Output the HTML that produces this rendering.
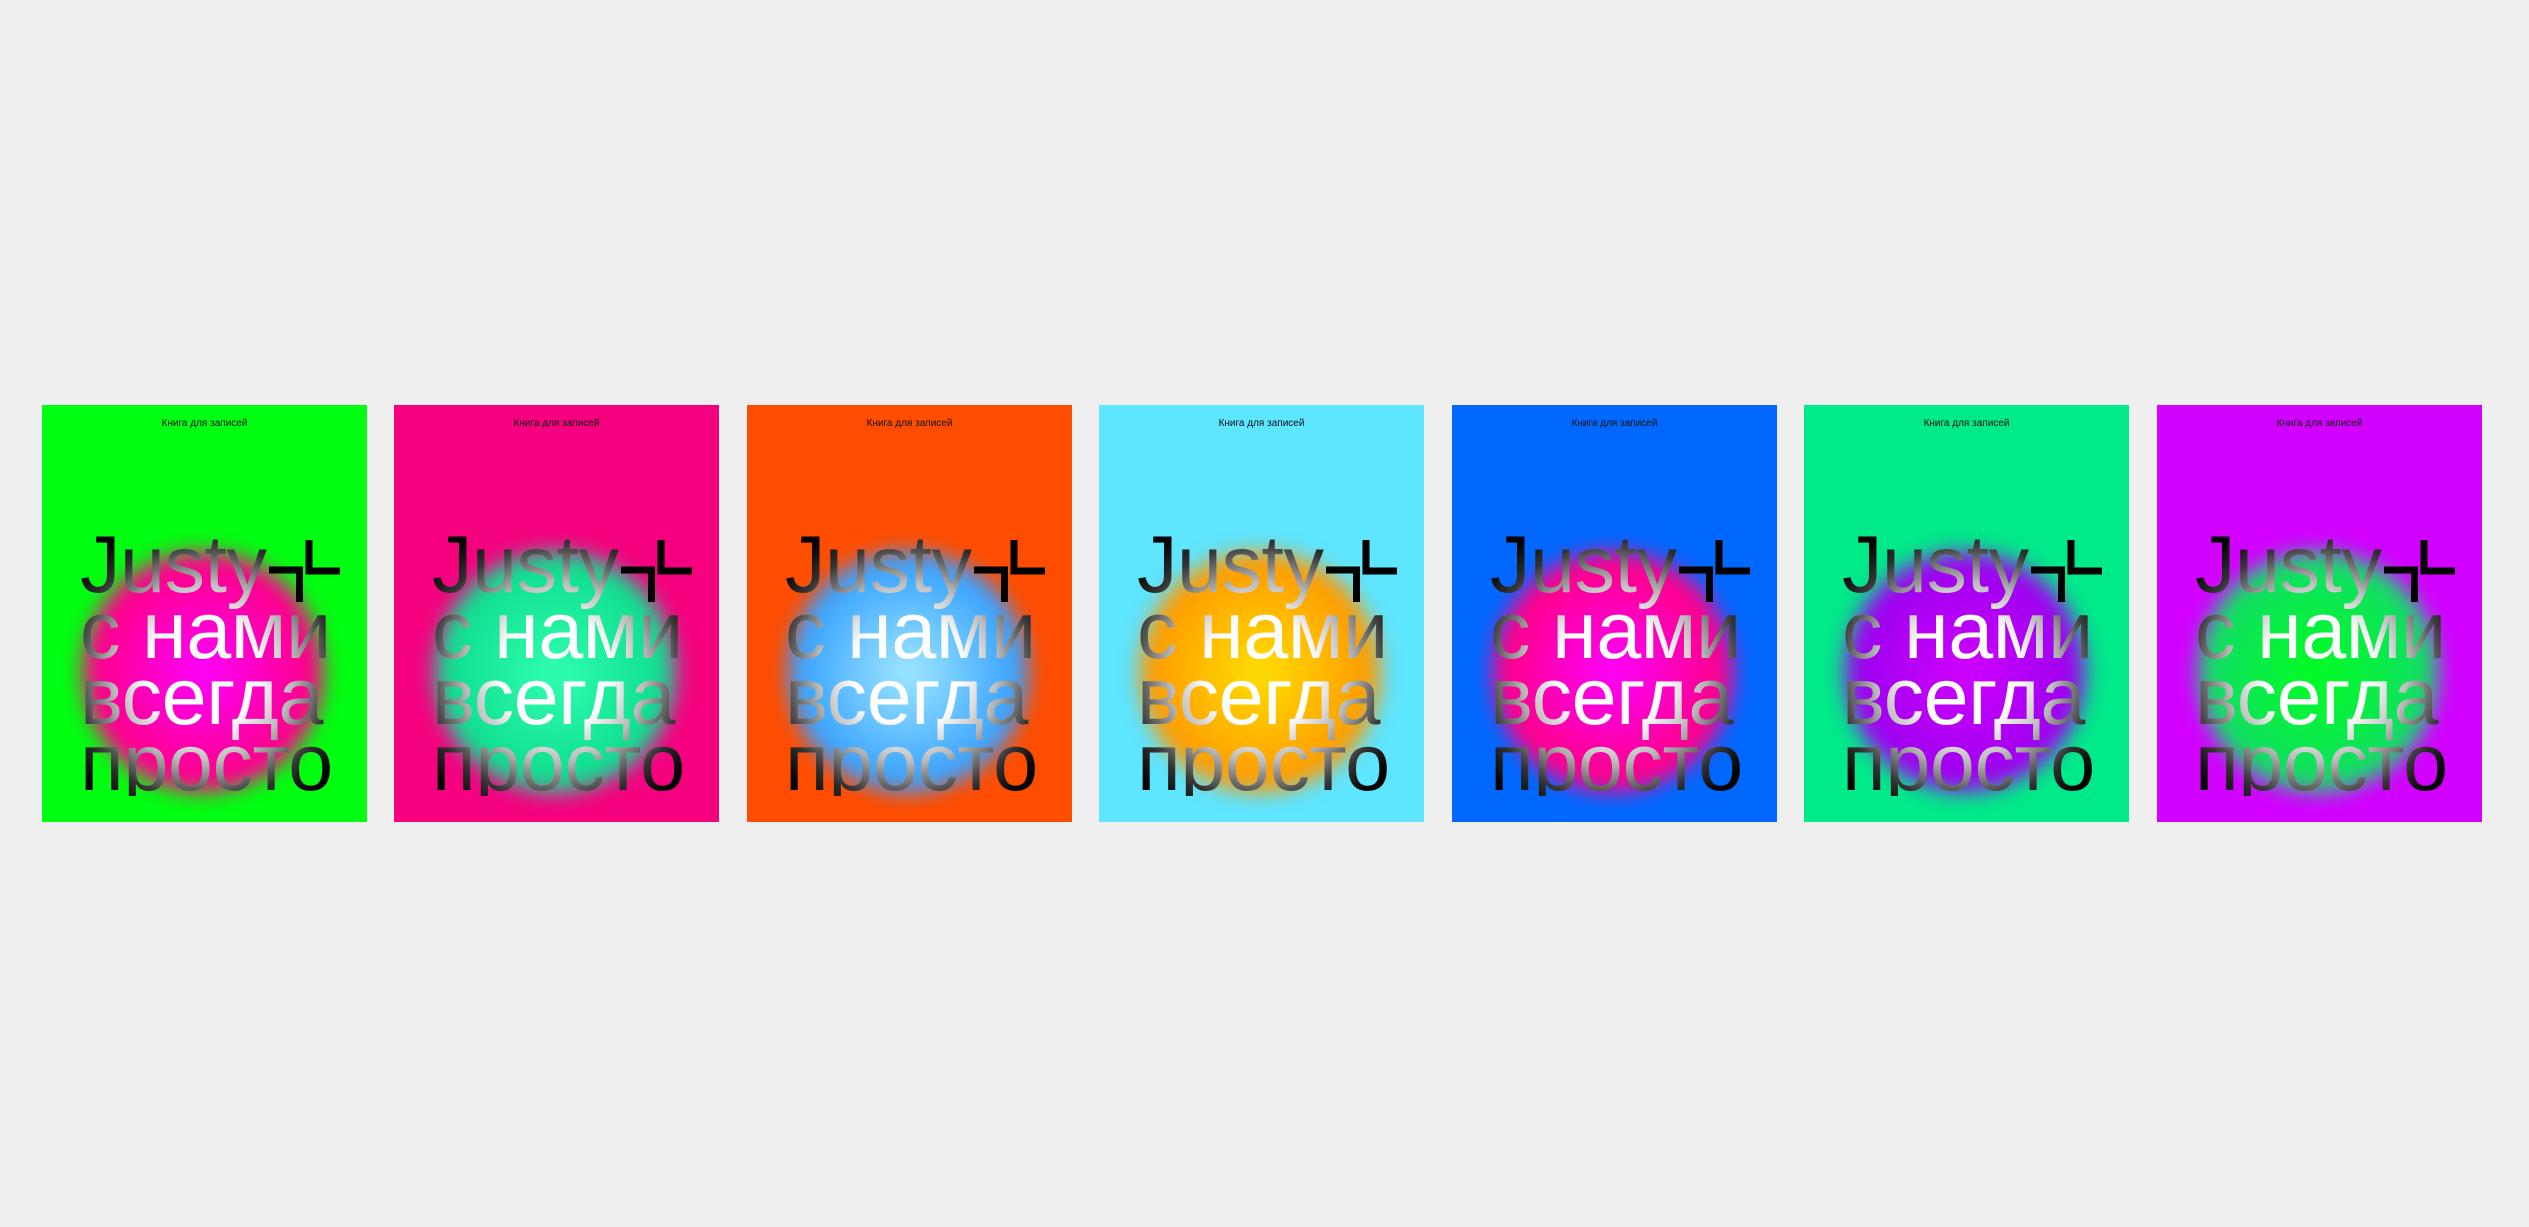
<!DOCTYPE html>
<html><head><meta charset="utf-8"><style>
body{margin:0;width:2529px;height:1227px;background:#efefef;position:relative;overflow:hidden;font-family:"Liberation Sans","DejaVu Sans",sans-serif}
.c{position:absolute;top:405px;width:325px;height:417px;overflow:hidden}
.t{position:absolute;top:13px;left:0;width:100%;text-align:center;font-size:10px;color:#111}
.b{position:absolute;left:41px;top:147px;width:240px;height:240px;border-radius:50%;filter:blur(10px)}
.x{position:absolute;left:38px;top:127px;width:300px;font-size:81px;line-height:66px;letter-spacing:-0.5px;white-space:nowrap;
background:radial-gradient(circle at 123px 140px,#fff 0,#fff 55px,#bbb 90px,#333 130px,#000 160px);
-webkit-background-clip:text;background-clip:text;color:transparent}
svg{position:absolute;left:0;top:0}
</style></head><body>
<div class="c" style="left:42px;background:#00ff10"><div class="t">Книга для записей</div><div class="b" style="background:radial-gradient(circle,#ff00ff 0,#ff0090 60%,#ff0070 85%,rgba(255,0,112,0) 100%)"></div><div class="x">Justy<br>с нами<br>всегда<br>просто</div><svg width="325" height="417"><path d="M227 165H257.5V197M267 135V166H298" fill="none" stroke="#000" stroke-width="7"/></svg></div>
<div class="c" style="left:394px;background:#f5007f"><div class="t">Книга для записей</div><div class="b" style="background:radial-gradient(circle,#30ffb0 0,#10e090 60%,#20c0a0 85%,rgba(32,192,160,0) 100%)"></div><div class="x">Justy<br>с нами<br>всегда<br>просто</div><svg width="325" height="417"><path d="M227 165H257.5V197M267 135V166H298" fill="none" stroke="#000" stroke-width="7"/></svg></div>
<div class="c" style="left:747px;background:#ff4d00"><div class="t">Книга для записей</div><div class="b" style="background:radial-gradient(circle,#a0e8ff 0,#40a8ff 60%,#2080ff 85%,rgba(32,128,255,0) 100%)"></div><div class="x">Justy<br>с нами<br>всегда<br>просто</div><svg width="325" height="417"><path d="M227 165H257.5V197M267 135V166H298" fill="none" stroke="#000" stroke-width="7"/></svg></div>
<div class="c" style="left:1099px;background:#5ee5ff"><div class="t">Книга для записей</div><div class="b" style="background:radial-gradient(circle,#ffe000 0,#ffa000 60%,#ff8000 85%,rgba(255,128,0,0) 100%)"></div><div class="x">Justy<br>с нами<br>всегда<br>просто</div><svg width="325" height="417"><path d="M227 165H257.5V197M267 135V166H298" fill="none" stroke="#000" stroke-width="7"/></svg></div>
<div class="c" style="left:1452px;background:#0068ff"><div class="t">Книга для записей</div><div class="b" style="background:radial-gradient(circle,#ff00ff 0,#ff0090 60%,#ff0070 85%,rgba(255,0,112,0) 100%)"></div><div class="x">Justy<br>с нами<br>всегда<br>просто</div><svg width="325" height="417"><path d="M227 165H257.5V197M267 135V166H298" fill="none" stroke="#000" stroke-width="7"/></svg></div>
<div class="c" style="left:1804px;background:#00ea8a"><div class="t">Книга для записей</div><div class="b" style="background:radial-gradient(circle,#d000ff 0,#a000f0 60%,#8020e0 85%,rgba(128,32,224,0) 100%)"></div><div class="x">Justy<br>с нами<br>всегда<br>просто</div><svg width="325" height="417"><path d="M227 165H257.5V197M267 135V166H298" fill="none" stroke="#000" stroke-width="7"/></svg></div>
<div class="c" style="left:2157px;background:#d200ff"><div class="t">Книга для записей</div><div class="b" style="background:radial-gradient(circle,#00ff20 0,#10e060 60%,#30c0a0 85%,rgba(48,192,160,0) 100%)"></div><div class="x">Justy<br>с нами<br>всегда<br>просто</div><svg width="325" height="417"><path d="M227 165H257.5V197M267 135V166H298" fill="none" stroke="#000" stroke-width="7"/></svg></div>
</body></html>
